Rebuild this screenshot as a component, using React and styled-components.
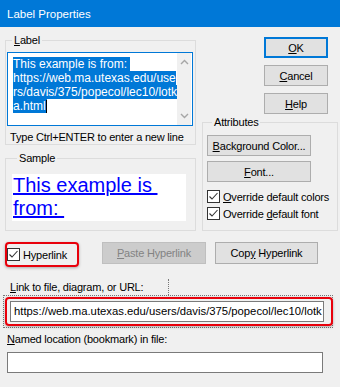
import React from "react";
import styled, { createGlobalStyle } from "styled-components";

const GlobalStyle = createGlobalStyle`
  html, body {
    margin: 0;
    padding: 0;
    background: #f0f0f0;
  }
  body {
    font-family: "Liberation Sans", Arial, sans-serif;
    font-size: 11px;
    letter-spacing: -0.2px;
    color: #000;
  }
`;

const Window = styled.div`
  width: 340px;
  height: 387px;
  background: #f0f0f0;
  overflow: hidden;
  display: flex;
  flex-direction: column;
`;

const TitleBar = styled.div`
  height: 27px;
  flex-shrink: 0;
  background: #0078d7;
  color: #fff;
  font-size: 11.5px;
  letter-spacing: 0;
  display: flex;
  align-items: center;
  padding-left: 7px;
`;

const Top = styled.div`
  display: grid;
  grid-template-columns: 191px 136px;
  column-gap: 6px;
  padding: 6px 0 0 5px;
`;

const Column = styled.div`
  display: flex;
  flex-direction: column;
`;

const Group = styled.fieldset`
  margin: ${(p) => p.$top || 0}px 0 0 0;
  padding: ${(p) => p.$pad || "0"};
  min-width: 0;
  border: 1px solid #dcdcdc;
  flex: ${(p) => (p.$grow ? 1 : "none")};
  display: flex;
  flex-direction: column;
`;

const Legend = styled.legend`
  margin-left: 5px;
  padding: 0 2px;
  line-height: 14px;
`;

const Key = styled.span`
  text-decoration: underline;
`;

const TextArea = styled.div`
  height: 72px;
  border: 1px solid #0078d7;
  background: #fff;
  display: flex;
  font-size: 12px;
  letter-spacing: 0;
`;

const TextLines = styled.div`
  flex: 1;
  padding: 4px 0 0 5px;
`;

const SelLine = styled.div`
  width: fit-content;
  line-height: 14px;
  white-space: pre;
  background: #0078d7;
  color: #fff;
  display: flex;
  align-items: center;
`;

const Caret = styled.span`
  display: inline-block;
  width: 1px;
  height: 13px;
  background: #000;
`;

const ScrollBar = styled.div`
  width: 16px;
  margin-right: 1px;
  background: #f0f0f0;
  display: flex;
  flex-direction: column;
  justify-content: space-between;
  align-items: center;
  padding: 6px 0;
`;

const Hint = styled.div`
  margin: 4px 0 0 3px;
  line-height: 14px;
  white-space: nowrap;
`;

const SampleBox = styled.div`
  height: 47px;
  background: #fff;
  padding-left: 1px;
`;

const SampleLine = styled.div`
  font-size: 20px;
  letter-spacing: 0;
  line-height: 23px;
  color: #0000ff;
  text-decoration: underline;
  white-space: pre;
`;

const ButtonStack = styled.div`
  margin: 4px 0 0 62px;
  width: 64px;
  display: flex;
  flex-direction: column;
  gap: 7px;
`;

const Button = styled.div`
  box-sizing: border-box;
  width: ${(p) => p.$w || 64}px;
  height: ${(p) => p.$h || 21}px;
  display: flex;
  align-items: center;
  justify-content: center;
  background: ${(p) => (p.$disabled ? "#cccccc" : "#e1e1e1")};
  border: ${(p) =>
    p.$default ? "2px solid #0078d7" : p.$disabled ? "1px solid #bfbfbf" : "1px solid #adadad"};
  color: ${(p) => (p.$disabled ? "#838383" : "#000")};
  white-space: nowrap;
`;

const AttrBody = styled.div`
  display: flex;
  flex-direction: column;
  gap: 5px;
`;

const CheckRow = styled.div`
  height: 17px;
  display: flex;
  align-items: center;
  gap: 3px;
  white-space: nowrap;
`;

const CheckList = styled.div`
  margin-top: 1px;
  display: flex;
  flex-direction: column;
`;

const Box = styled.span`
  box-sizing: border-box;
  width: 13px;
  height: 13px;
  border: 1px solid #333;
  background: #fff;
  display: flex;
  flex-shrink: 0;
`;

const LinkRow = styled.div`
  margin: 11px 0 0 5px;
  display: flex;
  align-items: flex-start;
`;

const RedFrame = styled.div`
  border: 2px solid #e8000b;
  border-radius: 4px;
  box-shadow: 0 1px 3px rgba(0, 0, 0, 0.3);
  display: flex;
  align-items: center;
`;

const HyperFrame = styled(RedFrame)`
  height: 21px;
  width: 70px;
`;

const PasteWrap = styled.div`
  margin-left: 23px;
  display: flex;
  gap: 9px;
`;

const FieldLabel = styled.div`
  margin: ${(p) => p.$top}px 0 0 ${(p) => p.$left}px;
  height: ${(p) => p.$h || 14}px;
  line-height: 14px;
  display: flex;
`;

const DotLine = styled.span`
  margin-left: auto;
  margin-right: 171px;
  margin-top: -1px;
  border-left: 1px dotted #777;
`;

const DottedFrame = styled.div`
  margin-left: 3px;
  width: 328px;
  height: 31px;
  border: 1px dotted #777;
`;

const LinkFrame = styled(RedFrame)`
  margin: 1px 0 0 1px;
  width: 323px;
  height: 25px;
  padding: 0 0 0 1px;
`;

const Input = styled.div`
  box-sizing: border-box;
  width: ${(p) => p.$w}px;
  height: 21px;
  margin: ${(p) => p.$top || 0}px 0 0 ${(p) => p.$left || 0}px;
  border: 1px solid #7a7a7a;
  background: #fff;
  padding-left: 3px;
  font-size: 11.3px;
  letter-spacing: 0;
  line-height: 19px;
  white-space: nowrap;
  overflow: hidden;
`;

function Check() {
  return (
    <Box>
      <svg width="11" height="11" viewBox="0 0 11 11">
        <path d="M1.5 5.5 L4 8 L9.5 2" fill="none" stroke="#333" strokeWidth="1.1" />
      </svg>
    </Box>
  );
}

function Chevron({ up }) {
  return (
    <svg width="9" height="6" viewBox="0 0 9 6">
      <path
        d={up ? "M1 5 L4.5 1.5 L8 5" : "M1 1 L4.5 4.5 L8 1"}
        fill="none"
        stroke="#a6a6a6"
        strokeWidth="1.4"
      />
    </svg>
  );
}

export default function App() {
  return (
    <Window>
      <GlobalStyle />
      <TitleBar>Label Properties</TitleBar>
      <Top>
        <Column>
          <Group $pad="5px 2px 0 1px">
            <Legend>
              <Key>L</Key>abel
            </Legend>
            <TextArea>
              <TextLines>
                <SelLine>This example is from: </SelLine>
                <SelLine>https://web.ma.utexas.edu/use</SelLine>
                <SelLine>rs/davis/375/popecol/lec10/lotk</SelLine>
                <SelLine>
                  a.html
                  <Caret />
                </SelLine>
              </TextLines>
              <ScrollBar>
                <Chevron up />
                <Chevron />
              </ScrollBar>
            </TextArea>
            <Hint>Type Ctrl+ENTER to enter a new line</Hint>
          </Group>
          <Group $top={6} $grow $pad="9px 9px 9px 6px">
            <Legend>Sample</Legend>
            <SampleBox>
              <SampleLine>This example is </SampleLine>
              <SampleLine>from: </SampleLine>
            </SampleBox>
          </Group>
        </Column>
        <Column>
          <ButtonStack>
            <Button $default>
              <Key>O</Key>K
            </Button>
            <Button>
              <Key>C</Key>ancel
            </Button>
            <Button>
              <Key>H</Key>elp
            </Button>
          </ButtonStack>
          <Group $top={1} $grow $pad="6px 4px 8px 4px">
            <Legend>Attributes</Legend>
            <AttrBody>
              <Button $w={104}>
                <Key>B</Key>ackground Color...
              </Button>
              <Button $w={104}>
                <Key>F</Key>ont...
              </Button>
              <CheckList>
                <CheckRow>
                  <Check />
                  <span>
                    <Key>O</Key>verride default colors
                  </span>
                </CheckRow>
                <CheckRow>
                  <Check />
                  <span>
                    Override <Key>d</Key>efault font
                  </span>
                </CheckRow>
              </CheckList>
            </AttrBody>
          </Group>
        </Column>
      </Top>
      <LinkRow>
        <HyperFrame>
          <CheckRow>
            <Check />
            Hyperlink
          </CheckRow>
        </HyperFrame>
        <PasteWrap>
          <Button $w={104} $h={22} $disabled>
            <Key>P</Key>aste Hyperlink
          </Button>
          <Button $w={103} $h={22}>
            Cop<Key>y</Key>&nbsp;Hyperlink
          </Button>
        </PasteWrap>
      </LinkRow>
      <FieldLabel $top={13} $left={10} $h={15}>
        <span>
          <Key>L</Key>ink to file, diagram, or URL:
        </span>
        <DotLine />
      </FieldLabel>
      <DottedFrame>
        <LinkFrame>
          <Input $w={314} $left={2}>
            https://web.ma.utexas.edu/users/davis/375/popecol/lec10/lotk
          </Input>
        </LinkFrame>
      </DottedFrame>
      <FieldLabel $top={4} $left={7}>
        <span>
          <Key>N</Key>amed location (bookmark) in file:
        </span>
      </FieldLabel>
      <Input $w={316} $left={7} $top={6} />
    </Window>
  );
}
